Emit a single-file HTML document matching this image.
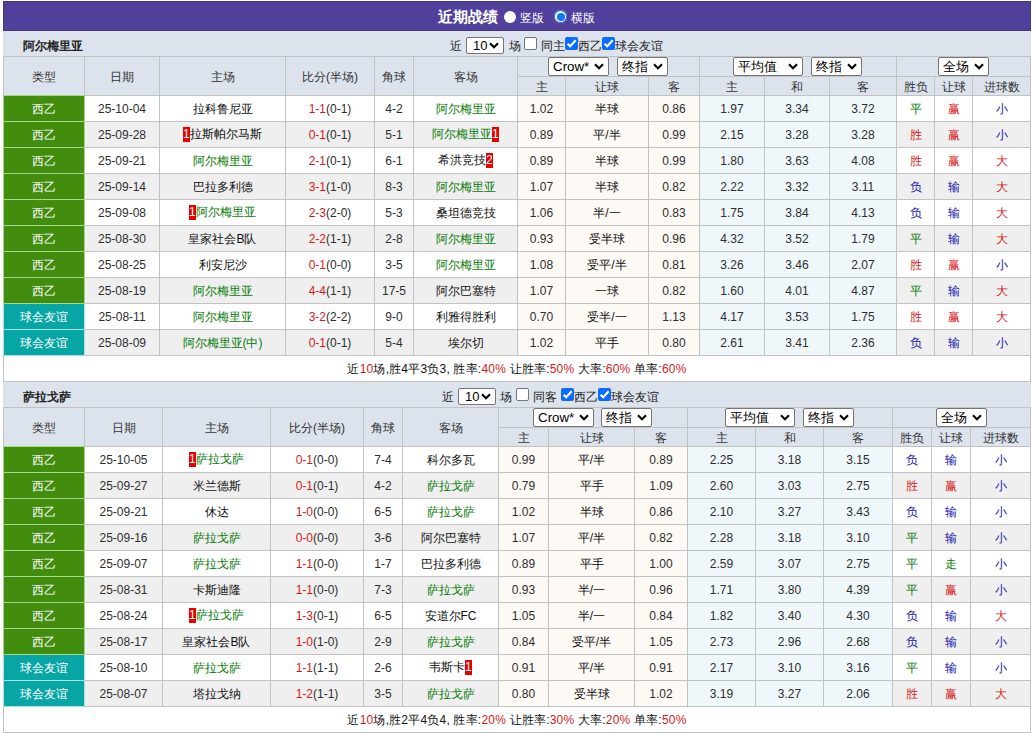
<!DOCTYPE html>
<html><head><meta charset="utf-8"><style>
.sm{letter-spacing:0.2px}
*{margin:0;padding:0;box-sizing:content-box}
html,body{width:1033px;height:733px;overflow:hidden;background:#fff}
body{position:relative;font-family:"Liberation Sans",sans-serif;font-size:12px;color:#111111;-webkit-text-stroke-width:0px}
.num{-webkit-text-stroke-width:0}
body>div{position:absolute}
.c{display:flex;align-items:center;justify-content:center;white-space:nowrap;line-height:14px}
.tn{font-weight:bold;font-size:12px;color:#222;white-space:nowrap;-webkit-text-stroke-width:0}
.lt{height:25px;line-height:31px;white-space:nowrap;color:#222}
.title{color:#fff;font-weight:bold;font-size:15px;white-space:nowrap;-webkit-text-stroke-width:0}
.tl{color:#fff;font-size:12px;height:30px;line-height:30px;white-space:nowrap}
.radio{width:13px;height:13px;border-radius:50%;background:#fff;box-sizing:border-box}
.radio div{position:absolute;border-radius:50%}
.radio .r0{left:0px;top:0px;width:13px;height:13px;background:#2a62e8}
.radio .r1{left:1px;top:1px;width:11px;height:11px;background:#fff}
.radio .r2{left:2.5px;top:2.5px;width:8px;height:8px;background:#0a78ff}
.sel{background:#fff;border:1px solid #767676;border-radius:2px;color:#000}
.sel .st{position:absolute;left:4px;top:0;bottom:0;display:flex;align-items:center;white-space:nowrap}
.sel .chev{position:absolute;right:4px;top:0;bottom:0;display:flex;align-items:center}
.cb{width:11px;height:11px;border:1px solid #767676;border-radius:2px;background:#fff}
.cb.on{width:13px;height:13px;border:none;background:#0a6cff;border-radius:2px}
.cb svg{position:absolute;left:0;top:0}
.bd{display:inline-block;background:#e60000;color:#fff;font-size:12px;line-height:15px;height:15px;width:7px;text-align:center;vertical-align:0px;text-indent:-0.5px}
</style></head>
<body>
<div style="left:3px;top:1px;width:1026px;height:28px;background:#50409b;border:1px solid #433a7e;"></div><div class="title" style="left:438px;top:2px;height:30px;line-height:30px;">近期战绩</div><div class="radio" style="left:504px;top:11px;width:12px;height:12px;"></div><div class="tl" style="left:520px;top:3px;">竖版</div><div class="radio on" style="left:554px;top:10px;"><div class="r0"></div><div class="r1"></div><div class="r2"></div></div><div class="tl" style="left:571px;top:3px;">横版</div><div style="left:3px;top:31px;width:1028px;height:25px;background:#dce3ed;"></div><div class="tn" style="left:23px;top:34px;height:25px;line-height:25px;">阿尔梅里亚</div><div class="lt" style="left:450px;top:31px;">近</div><div class="sel" style="left:466px;top:37px;width:36px;height:15px;"><span class="st" style="font-size:13px;left:6px;font-family:"Liberation Mono",monospace;">10</span><span class="chev"><svg width="10" height="7" viewBox="0 0 10 7"><path d="M1 1.2 L5 5.2 L9 1.2" fill="none" stroke="#000" stroke-width="2.1"/></svg></span></div><div class="lt" style="left:509px;top:31px;">场</div><div class="cb" style="left:524px;top:37px;"></div><div class="lt" style="left:541px;top:31px;">同主</div><div class="cb on" style="left:565px;top:37px;"><svg width="13" height="13" viewBox="0 0 13 13"><path d="M2.6 6.7 L5.2 9.3 L10.7 3.3" fill="none" stroke="#fff" stroke-width="2.1"/></svg></div><div class="lt" style="left:578px;top:31px;">西乙</div><div class="cb on" style="left:602px;top:37px;"><svg width="13" height="13" viewBox="0 0 13 13"><path d="M2.6 6.7 L5.2 9.3 L10.7 3.3" fill="none" stroke="#fff" stroke-width="2.1"/></svg></div><div class="lt" style="left:615px;top:31px;">球会友谊</div><div style="left:3px;top:56px;width:1028px;height:40px;background:#dce3ed;"></div><div style="left:3px;top:56px;width:1028px;height:1px;background:#c2c2c2;"></div><div style="left:3px;top:95px;width:1028px;height:1px;background:#c2c2c2;"></div><div style="left:517px;top:76px;width:513px;height:1px;background:#c2c2c2;"></div><div class="c" style="left:4px;top:58px;width:80px;height:38px;color:#333;"><span>类型</span></div><div class="c" style="left:85px;top:58px;width:74px;height:38px;color:#333;"><span>日期</span></div><div class="c" style="left:160px;top:58px;width:125px;height:38px;color:#333;"><span>主场</span></div><div class="c" style="left:286px;top:58px;width:88px;height:38px;color:#333;"><span>比分(半场)</span></div><div class="c" style="left:375px;top:58px;width:38px;height:38px;color:#333;"><span>角球</span></div><div class="c" style="left:414px;top:58px;width:103px;height:38px;color:#333;"><span>客场</span></div><div class="c" style="left:518px;top:78px;width:47px;height:18px;color:#333;"><span>主</span></div><div class="c" style="left:566px;top:78px;width:82px;height:18px;color:#333;"><span>让球</span></div><div class="c" style="left:649px;top:78px;width:50px;height:18px;color:#333;"><span>客</span></div><div class="c" style="left:700px;top:78px;width:64px;height:18px;color:#333;"><span>主</span></div><div class="c" style="left:765px;top:78px;width:64px;height:18px;color:#333;"><span>和</span></div><div class="c" style="left:830px;top:78px;width:66px;height:18px;color:#333;"><span>客</span></div><div class="c" style="left:897px;top:78px;width:37px;height:18px;color:#333;"><span>胜负</span></div><div class="c" style="left:935px;top:78px;width:37px;height:18px;color:#333;"><span>让球</span></div><div class="c" style="left:973px;top:78px;width:57px;height:18px;color:#333;"><span>进球数</span></div><div class="sel" style="left:548px;top:57px;width:59px;height:17px;"><span class="st" style="font-size:13.33px;left:4px;">Crow*</span><span class="chev"><svg width="10" height="7" viewBox="0 0 10 7"><path d="M1 1.2 L5 5.2 L9 1.2" fill="none" stroke="#000" stroke-width="2.1"/></svg></span></div><div class="sel" style="left:617px;top:57px;width:49px;height:17px;"><span class="st" style="font-size:13.33px;left:4px;">终指</span><span class="chev"><svg width="10" height="7" viewBox="0 0 10 7"><path d="M1 1.2 L5 5.2 L9 1.2" fill="none" stroke="#000" stroke-width="2.1"/></svg></span></div><div class="sel" style="left:733px;top:57px;width:68px;height:17px;"><span class="st" style="font-size:13.33px;left:4px;">平均值</span><span class="chev"><svg width="10" height="7" viewBox="0 0 10 7"><path d="M1 1.2 L5 5.2 L9 1.2" fill="none" stroke="#000" stroke-width="2.1"/></svg></span></div><div class="sel" style="left:811px;top:57px;width:49px;height:17px;"><span class="st" style="font-size:13.33px;left:4px;">终指</span><span class="chev"><svg width="10" height="7" viewBox="0 0 10 7"><path d="M1 1.2 L5 5.2 L9 1.2" fill="none" stroke="#000" stroke-width="2.1"/></svg></span></div><div class="sel" style="left:938px;top:57px;width:49px;height:17px;"><span class="st" style="font-size:13.33px;left:4px;">全场</span><span class="chev"><svg width="10" height="7" viewBox="0 0 10 7"><path d="M1 1.2 L5 5.2 L9 1.2" fill="none" stroke="#000" stroke-width="2.1"/></svg></span></div><div style="left:4px;top:96px;width:80px;height:25px;background:#428c0e;"></div><div style="left:85px;top:96px;width:74px;height:25px;background:#ffffff;"></div><div style="left:160px;top:96px;width:125px;height:25px;background:#ffffff;"></div><div style="left:286px;top:96px;width:88px;height:25px;background:#ffffff;"></div><div style="left:375px;top:96px;width:38px;height:25px;background:#ffffff;"></div><div style="left:414px;top:96px;width:103px;height:25px;background:#ffffff;"></div><div style="left:518px;top:96px;width:47px;height:25px;background:#fdf9f5;"></div><div style="left:566px;top:96px;width:82px;height:25px;background:#fdf9f5;"></div><div style="left:649px;top:96px;width:50px;height:25px;background:#fdf9f5;"></div><div style="left:700px;top:96px;width:64px;height:25px;background:#f0f7fb;"></div><div style="left:765px;top:96px;width:64px;height:25px;background:#f0f7fb;"></div><div style="left:830px;top:96px;width:66px;height:25px;background:#f0f7fb;"></div><div style="left:897px;top:96px;width:37px;height:25px;background:#ffffff;"></div><div style="left:935px;top:96px;width:37px;height:25px;background:#ffffff;"></div><div style="left:973px;top:96px;width:57px;height:25px;background:#ffffff;"></div><div class="c" style="left:4px;top:96px;width:80px;height:25px;"><span></span></div><div class="c" style="left:85px;top:96px;width:74px;height:25px;color:#2e2e2e;-webkit-text-stroke-width:0;"><span>25-10-04</span></div><div class="c" style="left:160px;top:96px;width:125px;height:25px;"><span><span style="color:#111111">拉科鲁尼亚</span></span></div><div class="c" style="left:286px;top:96px;width:88px;height:25px;color:#2e2e2e;-webkit-text-stroke-width:0;"><span><span style="color:#d61a1a">1-1</span>(0-1)</span></div><div class="c" style="left:375px;top:96px;width:38px;height:25px;color:#2e2e2e;-webkit-text-stroke-width:0;"><span>4-2</span></div><div class="c" style="left:414px;top:96px;width:103px;height:25px;"><span><span style="color:#067a06">阿尔梅里亚</span></span></div><div class="c" style="left:518px;top:96px;width:47px;height:25px;color:#2e2e2e;-webkit-text-stroke-width:0;"><span>1.02</span></div><div class="c" style="left:566px;top:96px;width:82px;height:25px;"><span>半球</span></div><div class="c" style="left:649px;top:96px;width:50px;height:25px;color:#2e2e2e;-webkit-text-stroke-width:0;"><span>0.86</span></div><div class="c" style="left:700px;top:96px;width:64px;height:25px;color:#2e2e2e;-webkit-text-stroke-width:0;"><span>1.97</span></div><div class="c" style="left:765px;top:96px;width:64px;height:25px;color:#2e2e2e;-webkit-text-stroke-width:0;"><span>3.34</span></div><div class="c" style="left:830px;top:96px;width:66px;height:25px;color:#2e2e2e;-webkit-text-stroke-width:0;"><span>3.72</span></div><div class="c" style="left:897px;top:96px;width:37px;height:25px;"><span><span style="color:#067a06">平</span></span></div><div class="c" style="left:935px;top:96px;width:37px;height:25px;"><span><span style="color:#d61a1a">赢</span></span></div><div class="c" style="left:973px;top:96px;width:57px;height:25px;"><span><span style="color:#1414b0">小</span></span></div><div style="left:3px;top:121px;width:1028px;height:1px;background:#c2c2c2;"></div><div style="left:4px;top:122px;width:80px;height:25px;background:#428c0e;"></div><div style="left:85px;top:122px;width:74px;height:25px;background:#efefef;"></div><div style="left:160px;top:122px;width:125px;height:25px;background:#efefef;"></div><div style="left:286px;top:122px;width:88px;height:25px;background:#efefef;"></div><div style="left:375px;top:122px;width:38px;height:25px;background:#efefef;"></div><div style="left:414px;top:122px;width:103px;height:25px;background:#efefef;"></div><div style="left:518px;top:122px;width:47px;height:25px;background:#fdf9f5;"></div><div style="left:566px;top:122px;width:82px;height:25px;background:#fdf9f5;"></div><div style="left:649px;top:122px;width:50px;height:25px;background:#fdf9f5;"></div><div style="left:700px;top:122px;width:64px;height:25px;background:#f0f7fb;"></div><div style="left:765px;top:122px;width:64px;height:25px;background:#f0f7fb;"></div><div style="left:830px;top:122px;width:66px;height:25px;background:#f0f7fb;"></div><div style="left:897px;top:122px;width:37px;height:25px;background:#efefef;"></div><div style="left:935px;top:122px;width:37px;height:25px;background:#efefef;"></div><div style="left:973px;top:122px;width:57px;height:25px;background:#efefef;"></div><div class="c" style="left:4px;top:122px;width:80px;height:25px;"><span></span></div><div class="c" style="left:85px;top:122px;width:74px;height:25px;color:#2e2e2e;-webkit-text-stroke-width:0;"><span>25-09-28</span></div><div class="c" style="left:160px;top:122px;width:125px;height:25px;"><span><span class="bd">1</span><span style="color:#111111">拉斯帕尔马斯</span></span></div><div class="c" style="left:286px;top:122px;width:88px;height:25px;color:#2e2e2e;-webkit-text-stroke-width:0;"><span><span style="color:#d61a1a">0-1</span>(0-1)</span></div><div class="c" style="left:375px;top:122px;width:38px;height:25px;color:#2e2e2e;-webkit-text-stroke-width:0;"><span>5-1</span></div><div class="c" style="left:414px;top:122px;width:103px;height:25px;"><span><span style="color:#067a06">阿尔梅里亚</span><span class="bd">1</span></span></div><div class="c" style="left:518px;top:122px;width:47px;height:25px;color:#2e2e2e;-webkit-text-stroke-width:0;"><span>0.89</span></div><div class="c" style="left:566px;top:122px;width:82px;height:25px;"><span>平/半</span></div><div class="c" style="left:649px;top:122px;width:50px;height:25px;color:#2e2e2e;-webkit-text-stroke-width:0;"><span>0.99</span></div><div class="c" style="left:700px;top:122px;width:64px;height:25px;color:#2e2e2e;-webkit-text-stroke-width:0;"><span>2.15</span></div><div class="c" style="left:765px;top:122px;width:64px;height:25px;color:#2e2e2e;-webkit-text-stroke-width:0;"><span>3.28</span></div><div class="c" style="left:830px;top:122px;width:66px;height:25px;color:#2e2e2e;-webkit-text-stroke-width:0;"><span>3.28</span></div><div class="c" style="left:897px;top:122px;width:37px;height:25px;"><span><span style="color:#d61a1a">胜</span></span></div><div class="c" style="left:935px;top:122px;width:37px;height:25px;"><span><span style="color:#d61a1a">赢</span></span></div><div class="c" style="left:973px;top:122px;width:57px;height:25px;"><span><span style="color:#1414b0">小</span></span></div><div style="left:3px;top:147px;width:1028px;height:1px;background:#c2c2c2;"></div><div style="left:4px;top:148px;width:80px;height:25px;background:#428c0e;"></div><div style="left:85px;top:148px;width:74px;height:25px;background:#ffffff;"></div><div style="left:160px;top:148px;width:125px;height:25px;background:#ffffff;"></div><div style="left:286px;top:148px;width:88px;height:25px;background:#ffffff;"></div><div style="left:375px;top:148px;width:38px;height:25px;background:#ffffff;"></div><div style="left:414px;top:148px;width:103px;height:25px;background:#ffffff;"></div><div style="left:518px;top:148px;width:47px;height:25px;background:#fdf9f5;"></div><div style="left:566px;top:148px;width:82px;height:25px;background:#fdf9f5;"></div><div style="left:649px;top:148px;width:50px;height:25px;background:#fdf9f5;"></div><div style="left:700px;top:148px;width:64px;height:25px;background:#f0f7fb;"></div><div style="left:765px;top:148px;width:64px;height:25px;background:#f0f7fb;"></div><div style="left:830px;top:148px;width:66px;height:25px;background:#f0f7fb;"></div><div style="left:897px;top:148px;width:37px;height:25px;background:#ffffff;"></div><div style="left:935px;top:148px;width:37px;height:25px;background:#ffffff;"></div><div style="left:973px;top:148px;width:57px;height:25px;background:#ffffff;"></div><div class="c" style="left:4px;top:148px;width:80px;height:25px;"><span></span></div><div class="c" style="left:85px;top:148px;width:74px;height:25px;color:#2e2e2e;-webkit-text-stroke-width:0;"><span>25-09-21</span></div><div class="c" style="left:160px;top:148px;width:125px;height:25px;"><span><span style="color:#067a06">阿尔梅里亚</span></span></div><div class="c" style="left:286px;top:148px;width:88px;height:25px;color:#2e2e2e;-webkit-text-stroke-width:0;"><span><span style="color:#d61a1a">2-1</span>(0-1)</span></div><div class="c" style="left:375px;top:148px;width:38px;height:25px;color:#2e2e2e;-webkit-text-stroke-width:0;"><span>6-1</span></div><div class="c" style="left:414px;top:148px;width:103px;height:25px;"><span><span style="color:#111111">希洪竞技</span><span class="bd">2</span></span></div><div class="c" style="left:518px;top:148px;width:47px;height:25px;color:#2e2e2e;-webkit-text-stroke-width:0;"><span>0.89</span></div><div class="c" style="left:566px;top:148px;width:82px;height:25px;"><span>半球</span></div><div class="c" style="left:649px;top:148px;width:50px;height:25px;color:#2e2e2e;-webkit-text-stroke-width:0;"><span>0.99</span></div><div class="c" style="left:700px;top:148px;width:64px;height:25px;color:#2e2e2e;-webkit-text-stroke-width:0;"><span>1.80</span></div><div class="c" style="left:765px;top:148px;width:64px;height:25px;color:#2e2e2e;-webkit-text-stroke-width:0;"><span>3.63</span></div><div class="c" style="left:830px;top:148px;width:66px;height:25px;color:#2e2e2e;-webkit-text-stroke-width:0;"><span>4.08</span></div><div class="c" style="left:897px;top:148px;width:37px;height:25px;"><span><span style="color:#d61a1a">胜</span></span></div><div class="c" style="left:935px;top:148px;width:37px;height:25px;"><span><span style="color:#d61a1a">赢</span></span></div><div class="c" style="left:973px;top:148px;width:57px;height:25px;"><span><span style="color:#d61a1a">大</span></span></div><div style="left:3px;top:173px;width:1028px;height:1px;background:#c2c2c2;"></div><div style="left:4px;top:174px;width:80px;height:25px;background:#428c0e;"></div><div style="left:85px;top:174px;width:74px;height:25px;background:#efefef;"></div><div style="left:160px;top:174px;width:125px;height:25px;background:#efefef;"></div><div style="left:286px;top:174px;width:88px;height:25px;background:#efefef;"></div><div style="left:375px;top:174px;width:38px;height:25px;background:#efefef;"></div><div style="left:414px;top:174px;width:103px;height:25px;background:#efefef;"></div><div style="left:518px;top:174px;width:47px;height:25px;background:#fdf9f5;"></div><div style="left:566px;top:174px;width:82px;height:25px;background:#fdf9f5;"></div><div style="left:649px;top:174px;width:50px;height:25px;background:#fdf9f5;"></div><div style="left:700px;top:174px;width:64px;height:25px;background:#f0f7fb;"></div><div style="left:765px;top:174px;width:64px;height:25px;background:#f0f7fb;"></div><div style="left:830px;top:174px;width:66px;height:25px;background:#f0f7fb;"></div><div style="left:897px;top:174px;width:37px;height:25px;background:#efefef;"></div><div style="left:935px;top:174px;width:37px;height:25px;background:#efefef;"></div><div style="left:973px;top:174px;width:57px;height:25px;background:#efefef;"></div><div class="c" style="left:4px;top:174px;width:80px;height:25px;"><span></span></div><div class="c" style="left:85px;top:174px;width:74px;height:25px;color:#2e2e2e;-webkit-text-stroke-width:0;"><span>25-09-14</span></div><div class="c" style="left:160px;top:174px;width:125px;height:25px;"><span><span style="color:#111111">巴拉多利德</span></span></div><div class="c" style="left:286px;top:174px;width:88px;height:25px;color:#2e2e2e;-webkit-text-stroke-width:0;"><span><span style="color:#d61a1a">3-1</span>(1-0)</span></div><div class="c" style="left:375px;top:174px;width:38px;height:25px;color:#2e2e2e;-webkit-text-stroke-width:0;"><span>8-3</span></div><div class="c" style="left:414px;top:174px;width:103px;height:25px;"><span><span style="color:#067a06">阿尔梅里亚</span></span></div><div class="c" style="left:518px;top:174px;width:47px;height:25px;color:#2e2e2e;-webkit-text-stroke-width:0;"><span>1.07</span></div><div class="c" style="left:566px;top:174px;width:82px;height:25px;"><span>半球</span></div><div class="c" style="left:649px;top:174px;width:50px;height:25px;color:#2e2e2e;-webkit-text-stroke-width:0;"><span>0.82</span></div><div class="c" style="left:700px;top:174px;width:64px;height:25px;color:#2e2e2e;-webkit-text-stroke-width:0;"><span>2.22</span></div><div class="c" style="left:765px;top:174px;width:64px;height:25px;color:#2e2e2e;-webkit-text-stroke-width:0;"><span>3.32</span></div><div class="c" style="left:830px;top:174px;width:66px;height:25px;color:#2e2e2e;-webkit-text-stroke-width:0;"><span>3.11</span></div><div class="c" style="left:897px;top:174px;width:37px;height:25px;"><span><span style="color:#1414b0">负</span></span></div><div class="c" style="left:935px;top:174px;width:37px;height:25px;"><span><span style="color:#1414b0">输</span></span></div><div class="c" style="left:973px;top:174px;width:57px;height:25px;"><span><span style="color:#d61a1a">大</span></span></div><div style="left:3px;top:199px;width:1028px;height:1px;background:#c2c2c2;"></div><div style="left:4px;top:200px;width:80px;height:25px;background:#428c0e;"></div><div style="left:85px;top:200px;width:74px;height:25px;background:#ffffff;"></div><div style="left:160px;top:200px;width:125px;height:25px;background:#ffffff;"></div><div style="left:286px;top:200px;width:88px;height:25px;background:#ffffff;"></div><div style="left:375px;top:200px;width:38px;height:25px;background:#ffffff;"></div><div style="left:414px;top:200px;width:103px;height:25px;background:#ffffff;"></div><div style="left:518px;top:200px;width:47px;height:25px;background:#fdf9f5;"></div><div style="left:566px;top:200px;width:82px;height:25px;background:#fdf9f5;"></div><div style="left:649px;top:200px;width:50px;height:25px;background:#fdf9f5;"></div><div style="left:700px;top:200px;width:64px;height:25px;background:#f0f7fb;"></div><div style="left:765px;top:200px;width:64px;height:25px;background:#f0f7fb;"></div><div style="left:830px;top:200px;width:66px;height:25px;background:#f0f7fb;"></div><div style="left:897px;top:200px;width:37px;height:25px;background:#ffffff;"></div><div style="left:935px;top:200px;width:37px;height:25px;background:#ffffff;"></div><div style="left:973px;top:200px;width:57px;height:25px;background:#ffffff;"></div><div class="c" style="left:4px;top:200px;width:80px;height:25px;"><span></span></div><div class="c" style="left:85px;top:200px;width:74px;height:25px;color:#2e2e2e;-webkit-text-stroke-width:0;"><span>25-09-08</span></div><div class="c" style="left:160px;top:200px;width:125px;height:25px;"><span><span class="bd">1</span><span style="color:#067a06">阿尔梅里亚</span></span></div><div class="c" style="left:286px;top:200px;width:88px;height:25px;color:#2e2e2e;-webkit-text-stroke-width:0;"><span><span style="color:#d61a1a">2-3</span>(2-0)</span></div><div class="c" style="left:375px;top:200px;width:38px;height:25px;color:#2e2e2e;-webkit-text-stroke-width:0;"><span>5-3</span></div><div class="c" style="left:414px;top:200px;width:103px;height:25px;"><span><span style="color:#111111">桑坦德竞技</span></span></div><div class="c" style="left:518px;top:200px;width:47px;height:25px;color:#2e2e2e;-webkit-text-stroke-width:0;"><span>1.06</span></div><div class="c" style="left:566px;top:200px;width:82px;height:25px;"><span>半/一</span></div><div class="c" style="left:649px;top:200px;width:50px;height:25px;color:#2e2e2e;-webkit-text-stroke-width:0;"><span>0.83</span></div><div class="c" style="left:700px;top:200px;width:64px;height:25px;color:#2e2e2e;-webkit-text-stroke-width:0;"><span>1.75</span></div><div class="c" style="left:765px;top:200px;width:64px;height:25px;color:#2e2e2e;-webkit-text-stroke-width:0;"><span>3.84</span></div><div class="c" style="left:830px;top:200px;width:66px;height:25px;color:#2e2e2e;-webkit-text-stroke-width:0;"><span>4.13</span></div><div class="c" style="left:897px;top:200px;width:37px;height:25px;"><span><span style="color:#1414b0">负</span></span></div><div class="c" style="left:935px;top:200px;width:37px;height:25px;"><span><span style="color:#1414b0">输</span></span></div><div class="c" style="left:973px;top:200px;width:57px;height:25px;"><span><span style="color:#d61a1a">大</span></span></div><div style="left:3px;top:225px;width:1028px;height:1px;background:#c2c2c2;"></div><div style="left:4px;top:226px;width:80px;height:25px;background:#428c0e;"></div><div style="left:85px;top:226px;width:74px;height:25px;background:#efefef;"></div><div style="left:160px;top:226px;width:125px;height:25px;background:#efefef;"></div><div style="left:286px;top:226px;width:88px;height:25px;background:#efefef;"></div><div style="left:375px;top:226px;width:38px;height:25px;background:#efefef;"></div><div style="left:414px;top:226px;width:103px;height:25px;background:#efefef;"></div><div style="left:518px;top:226px;width:47px;height:25px;background:#fdf9f5;"></div><div style="left:566px;top:226px;width:82px;height:25px;background:#fdf9f5;"></div><div style="left:649px;top:226px;width:50px;height:25px;background:#fdf9f5;"></div><div style="left:700px;top:226px;width:64px;height:25px;background:#f0f7fb;"></div><div style="left:765px;top:226px;width:64px;height:25px;background:#f0f7fb;"></div><div style="left:830px;top:226px;width:66px;height:25px;background:#f0f7fb;"></div><div style="left:897px;top:226px;width:37px;height:25px;background:#efefef;"></div><div style="left:935px;top:226px;width:37px;height:25px;background:#efefef;"></div><div style="left:973px;top:226px;width:57px;height:25px;background:#efefef;"></div><div class="c" style="left:4px;top:226px;width:80px;height:25px;"><span></span></div><div class="c" style="left:85px;top:226px;width:74px;height:25px;color:#2e2e2e;-webkit-text-stroke-width:0;"><span>25-08-30</span></div><div class="c" style="left:160px;top:226px;width:125px;height:25px;"><span><span style="color:#111111">皇家社会B队</span></span></div><div class="c" style="left:286px;top:226px;width:88px;height:25px;color:#2e2e2e;-webkit-text-stroke-width:0;"><span><span style="color:#d61a1a">2-2</span>(1-1)</span></div><div class="c" style="left:375px;top:226px;width:38px;height:25px;color:#2e2e2e;-webkit-text-stroke-width:0;"><span>2-8</span></div><div class="c" style="left:414px;top:226px;width:103px;height:25px;"><span><span style="color:#067a06">阿尔梅里亚</span></span></div><div class="c" style="left:518px;top:226px;width:47px;height:25px;color:#2e2e2e;-webkit-text-stroke-width:0;"><span>0.93</span></div><div class="c" style="left:566px;top:226px;width:82px;height:25px;"><span>受半球</span></div><div class="c" style="left:649px;top:226px;width:50px;height:25px;color:#2e2e2e;-webkit-text-stroke-width:0;"><span>0.96</span></div><div class="c" style="left:700px;top:226px;width:64px;height:25px;color:#2e2e2e;-webkit-text-stroke-width:0;"><span>4.32</span></div><div class="c" style="left:765px;top:226px;width:64px;height:25px;color:#2e2e2e;-webkit-text-stroke-width:0;"><span>3.52</span></div><div class="c" style="left:830px;top:226px;width:66px;height:25px;color:#2e2e2e;-webkit-text-stroke-width:0;"><span>1.79</span></div><div class="c" style="left:897px;top:226px;width:37px;height:25px;"><span><span style="color:#067a06">平</span></span></div><div class="c" style="left:935px;top:226px;width:37px;height:25px;"><span><span style="color:#1414b0">输</span></span></div><div class="c" style="left:973px;top:226px;width:57px;height:25px;"><span><span style="color:#d61a1a">大</span></span></div><div style="left:3px;top:251px;width:1028px;height:1px;background:#c2c2c2;"></div><div style="left:4px;top:252px;width:80px;height:25px;background:#428c0e;"></div><div style="left:85px;top:252px;width:74px;height:25px;background:#ffffff;"></div><div style="left:160px;top:252px;width:125px;height:25px;background:#ffffff;"></div><div style="left:286px;top:252px;width:88px;height:25px;background:#ffffff;"></div><div style="left:375px;top:252px;width:38px;height:25px;background:#ffffff;"></div><div style="left:414px;top:252px;width:103px;height:25px;background:#ffffff;"></div><div style="left:518px;top:252px;width:47px;height:25px;background:#fdf9f5;"></div><div style="left:566px;top:252px;width:82px;height:25px;background:#fdf9f5;"></div><div style="left:649px;top:252px;width:50px;height:25px;background:#fdf9f5;"></div><div style="left:700px;top:252px;width:64px;height:25px;background:#f0f7fb;"></div><div style="left:765px;top:252px;width:64px;height:25px;background:#f0f7fb;"></div><div style="left:830px;top:252px;width:66px;height:25px;background:#f0f7fb;"></div><div style="left:897px;top:252px;width:37px;height:25px;background:#ffffff;"></div><div style="left:935px;top:252px;width:37px;height:25px;background:#ffffff;"></div><div style="left:973px;top:252px;width:57px;height:25px;background:#ffffff;"></div><div class="c" style="left:4px;top:252px;width:80px;height:25px;"><span></span></div><div class="c" style="left:85px;top:252px;width:74px;height:25px;color:#2e2e2e;-webkit-text-stroke-width:0;"><span>25-08-25</span></div><div class="c" style="left:160px;top:252px;width:125px;height:25px;"><span><span style="color:#111111">利安尼沙</span></span></div><div class="c" style="left:286px;top:252px;width:88px;height:25px;color:#2e2e2e;-webkit-text-stroke-width:0;"><span><span style="color:#d61a1a">0-1</span>(0-0)</span></div><div class="c" style="left:375px;top:252px;width:38px;height:25px;color:#2e2e2e;-webkit-text-stroke-width:0;"><span>3-5</span></div><div class="c" style="left:414px;top:252px;width:103px;height:25px;"><span><span style="color:#067a06">阿尔梅里亚</span></span></div><div class="c" style="left:518px;top:252px;width:47px;height:25px;color:#2e2e2e;-webkit-text-stroke-width:0;"><span>1.08</span></div><div class="c" style="left:566px;top:252px;width:82px;height:25px;"><span>受平/半</span></div><div class="c" style="left:649px;top:252px;width:50px;height:25px;color:#2e2e2e;-webkit-text-stroke-width:0;"><span>0.81</span></div><div class="c" style="left:700px;top:252px;width:64px;height:25px;color:#2e2e2e;-webkit-text-stroke-width:0;"><span>3.26</span></div><div class="c" style="left:765px;top:252px;width:64px;height:25px;color:#2e2e2e;-webkit-text-stroke-width:0;"><span>3.46</span></div><div class="c" style="left:830px;top:252px;width:66px;height:25px;color:#2e2e2e;-webkit-text-stroke-width:0;"><span>2.07</span></div><div class="c" style="left:897px;top:252px;width:37px;height:25px;"><span><span style="color:#d61a1a">胜</span></span></div><div class="c" style="left:935px;top:252px;width:37px;height:25px;"><span><span style="color:#d61a1a">赢</span></span></div><div class="c" style="left:973px;top:252px;width:57px;height:25px;"><span><span style="color:#1414b0">小</span></span></div><div style="left:3px;top:277px;width:1028px;height:1px;background:#c2c2c2;"></div><div style="left:4px;top:278px;width:80px;height:25px;background:#428c0e;"></div><div style="left:85px;top:278px;width:74px;height:25px;background:#efefef;"></div><div style="left:160px;top:278px;width:125px;height:25px;background:#efefef;"></div><div style="left:286px;top:278px;width:88px;height:25px;background:#efefef;"></div><div style="left:375px;top:278px;width:38px;height:25px;background:#efefef;"></div><div style="left:414px;top:278px;width:103px;height:25px;background:#efefef;"></div><div style="left:518px;top:278px;width:47px;height:25px;background:#fdf9f5;"></div><div style="left:566px;top:278px;width:82px;height:25px;background:#fdf9f5;"></div><div style="left:649px;top:278px;width:50px;height:25px;background:#fdf9f5;"></div><div style="left:700px;top:278px;width:64px;height:25px;background:#f0f7fb;"></div><div style="left:765px;top:278px;width:64px;height:25px;background:#f0f7fb;"></div><div style="left:830px;top:278px;width:66px;height:25px;background:#f0f7fb;"></div><div style="left:897px;top:278px;width:37px;height:25px;background:#efefef;"></div><div style="left:935px;top:278px;width:37px;height:25px;background:#efefef;"></div><div style="left:973px;top:278px;width:57px;height:25px;background:#efefef;"></div><div class="c" style="left:4px;top:278px;width:80px;height:25px;"><span></span></div><div class="c" style="left:85px;top:278px;width:74px;height:25px;color:#2e2e2e;-webkit-text-stroke-width:0;"><span>25-08-19</span></div><div class="c" style="left:160px;top:278px;width:125px;height:25px;"><span><span style="color:#067a06">阿尔梅里亚</span></span></div><div class="c" style="left:286px;top:278px;width:88px;height:25px;color:#2e2e2e;-webkit-text-stroke-width:0;"><span><span style="color:#d61a1a">4-4</span>(1-1)</span></div><div class="c" style="left:375px;top:278px;width:38px;height:25px;color:#2e2e2e;-webkit-text-stroke-width:0;"><span>17-5</span></div><div class="c" style="left:414px;top:278px;width:103px;height:25px;"><span><span style="color:#111111">阿尔巴塞特</span></span></div><div class="c" style="left:518px;top:278px;width:47px;height:25px;color:#2e2e2e;-webkit-text-stroke-width:0;"><span>1.07</span></div><div class="c" style="left:566px;top:278px;width:82px;height:25px;"><span>一球</span></div><div class="c" style="left:649px;top:278px;width:50px;height:25px;color:#2e2e2e;-webkit-text-stroke-width:0;"><span>0.82</span></div><div class="c" style="left:700px;top:278px;width:64px;height:25px;color:#2e2e2e;-webkit-text-stroke-width:0;"><span>1.60</span></div><div class="c" style="left:765px;top:278px;width:64px;height:25px;color:#2e2e2e;-webkit-text-stroke-width:0;"><span>4.01</span></div><div class="c" style="left:830px;top:278px;width:66px;height:25px;color:#2e2e2e;-webkit-text-stroke-width:0;"><span>4.87</span></div><div class="c" style="left:897px;top:278px;width:37px;height:25px;"><span><span style="color:#067a06">平</span></span></div><div class="c" style="left:935px;top:278px;width:37px;height:25px;"><span><span style="color:#1414b0">输</span></span></div><div class="c" style="left:973px;top:278px;width:57px;height:25px;"><span><span style="color:#d61a1a">大</span></span></div><div style="left:3px;top:303px;width:1028px;height:1px;background:#c2c2c2;"></div><div style="left:4px;top:304px;width:80px;height:25px;background:#08a5a5;"></div><div style="left:85px;top:304px;width:74px;height:25px;background:#ffffff;"></div><div style="left:160px;top:304px;width:125px;height:25px;background:#ffffff;"></div><div style="left:286px;top:304px;width:88px;height:25px;background:#ffffff;"></div><div style="left:375px;top:304px;width:38px;height:25px;background:#ffffff;"></div><div style="left:414px;top:304px;width:103px;height:25px;background:#ffffff;"></div><div style="left:518px;top:304px;width:47px;height:25px;background:#fdf9f5;"></div><div style="left:566px;top:304px;width:82px;height:25px;background:#fdf9f5;"></div><div style="left:649px;top:304px;width:50px;height:25px;background:#fdf9f5;"></div><div style="left:700px;top:304px;width:64px;height:25px;background:#f0f7fb;"></div><div style="left:765px;top:304px;width:64px;height:25px;background:#f0f7fb;"></div><div style="left:830px;top:304px;width:66px;height:25px;background:#f0f7fb;"></div><div style="left:897px;top:304px;width:37px;height:25px;background:#ffffff;"></div><div style="left:935px;top:304px;width:37px;height:25px;background:#ffffff;"></div><div style="left:973px;top:304px;width:57px;height:25px;background:#ffffff;"></div><div class="c" style="left:4px;top:304px;width:80px;height:25px;"><span></span></div><div class="c" style="left:85px;top:304px;width:74px;height:25px;color:#2e2e2e;-webkit-text-stroke-width:0;"><span>25-08-11</span></div><div class="c" style="left:160px;top:304px;width:125px;height:25px;"><span><span style="color:#067a06">阿尔梅里亚</span></span></div><div class="c" style="left:286px;top:304px;width:88px;height:25px;color:#2e2e2e;-webkit-text-stroke-width:0;"><span><span style="color:#d61a1a">3-2</span>(2-2)</span></div><div class="c" style="left:375px;top:304px;width:38px;height:25px;color:#2e2e2e;-webkit-text-stroke-width:0;"><span>9-0</span></div><div class="c" style="left:414px;top:304px;width:103px;height:25px;"><span><span style="color:#111111">利雅得胜利</span></span></div><div class="c" style="left:518px;top:304px;width:47px;height:25px;color:#2e2e2e;-webkit-text-stroke-width:0;"><span>0.70</span></div><div class="c" style="left:566px;top:304px;width:82px;height:25px;"><span>受半/一</span></div><div class="c" style="left:649px;top:304px;width:50px;height:25px;color:#2e2e2e;-webkit-text-stroke-width:0;"><span>1.13</span></div><div class="c" style="left:700px;top:304px;width:64px;height:25px;color:#2e2e2e;-webkit-text-stroke-width:0;"><span>4.17</span></div><div class="c" style="left:765px;top:304px;width:64px;height:25px;color:#2e2e2e;-webkit-text-stroke-width:0;"><span>3.53</span></div><div class="c" style="left:830px;top:304px;width:66px;height:25px;color:#2e2e2e;-webkit-text-stroke-width:0;"><span>1.75</span></div><div class="c" style="left:897px;top:304px;width:37px;height:25px;"><span><span style="color:#d61a1a">胜</span></span></div><div class="c" style="left:935px;top:304px;width:37px;height:25px;"><span><span style="color:#d61a1a">赢</span></span></div><div class="c" style="left:973px;top:304px;width:57px;height:25px;"><span><span style="color:#d61a1a">大</span></span></div><div style="left:3px;top:329px;width:1028px;height:1px;background:#c2c2c2;"></div><div style="left:4px;top:330px;width:80px;height:25px;background:#08a5a5;"></div><div style="left:85px;top:330px;width:74px;height:25px;background:#efefef;"></div><div style="left:160px;top:330px;width:125px;height:25px;background:#efefef;"></div><div style="left:286px;top:330px;width:88px;height:25px;background:#efefef;"></div><div style="left:375px;top:330px;width:38px;height:25px;background:#efefef;"></div><div style="left:414px;top:330px;width:103px;height:25px;background:#efefef;"></div><div style="left:518px;top:330px;width:47px;height:25px;background:#fdf9f5;"></div><div style="left:566px;top:330px;width:82px;height:25px;background:#fdf9f5;"></div><div style="left:649px;top:330px;width:50px;height:25px;background:#fdf9f5;"></div><div style="left:700px;top:330px;width:64px;height:25px;background:#f0f7fb;"></div><div style="left:765px;top:330px;width:64px;height:25px;background:#f0f7fb;"></div><div style="left:830px;top:330px;width:66px;height:25px;background:#f0f7fb;"></div><div style="left:897px;top:330px;width:37px;height:25px;background:#efefef;"></div><div style="left:935px;top:330px;width:37px;height:25px;background:#efefef;"></div><div style="left:973px;top:330px;width:57px;height:25px;background:#efefef;"></div><div class="c" style="left:4px;top:330px;width:80px;height:25px;"><span></span></div><div class="c" style="left:85px;top:330px;width:74px;height:25px;color:#2e2e2e;-webkit-text-stroke-width:0;"><span>25-08-09</span></div><div class="c" style="left:160px;top:330px;width:125px;height:25px;"><span><span style="color:#067a06">阿尔梅里亚(中)</span></span></div><div class="c" style="left:286px;top:330px;width:88px;height:25px;color:#2e2e2e;-webkit-text-stroke-width:0;"><span><span style="color:#d61a1a">0-1</span>(0-1)</span></div><div class="c" style="left:375px;top:330px;width:38px;height:25px;color:#2e2e2e;-webkit-text-stroke-width:0;"><span>5-4</span></div><div class="c" style="left:414px;top:330px;width:103px;height:25px;"><span><span style="color:#111111">埃尔切</span></span></div><div class="c" style="left:518px;top:330px;width:47px;height:25px;color:#2e2e2e;-webkit-text-stroke-width:0;"><span>1.02</span></div><div class="c" style="left:566px;top:330px;width:82px;height:25px;"><span>平手</span></div><div class="c" style="left:649px;top:330px;width:50px;height:25px;color:#2e2e2e;-webkit-text-stroke-width:0;"><span>0.80</span></div><div class="c" style="left:700px;top:330px;width:64px;height:25px;color:#2e2e2e;-webkit-text-stroke-width:0;"><span>2.61</span></div><div class="c" style="left:765px;top:330px;width:64px;height:25px;color:#2e2e2e;-webkit-text-stroke-width:0;"><span>3.41</span></div><div class="c" style="left:830px;top:330px;width:66px;height:25px;color:#2e2e2e;-webkit-text-stroke-width:0;"><span>2.36</span></div><div class="c" style="left:897px;top:330px;width:37px;height:25px;"><span><span style="color:#1414b0">负</span></span></div><div class="c" style="left:935px;top:330px;width:37px;height:25px;"><span><span style="color:#1414b0">输</span></span></div><div class="c" style="left:973px;top:330px;width:57px;height:25px;"><span><span style="color:#1414b0">小</span></span></div><div style="left:3px;top:355px;width:1028px;height:1px;background:#c2c2c2;"></div><div style="left:3px;top:56px;width:1px;height:300px;background:#c2c2c2;"></div><div style="left:84px;top:56px;width:1px;height:300px;background:#c2c2c2;"></div><div style="left:159px;top:56px;width:1px;height:300px;background:#c2c2c2;"></div><div style="left:285px;top:56px;width:1px;height:300px;background:#c2c2c2;"></div><div style="left:374px;top:56px;width:1px;height:300px;background:#c2c2c2;"></div><div style="left:413px;top:56px;width:1px;height:300px;background:#c2c2c2;"></div><div style="left:517px;top:56px;width:1px;height:300px;background:#c2c2c2;"></div><div style="left:565px;top:76px;width:1px;height:280px;background:#c2c2c2;"></div><div style="left:648px;top:76px;width:1px;height:280px;background:#c2c2c2;"></div><div style="left:699px;top:56px;width:1px;height:300px;background:#c2c2c2;"></div><div style="left:764px;top:76px;width:1px;height:280px;background:#c2c2c2;"></div><div style="left:829px;top:76px;width:1px;height:280px;background:#c2c2c2;"></div><div style="left:896px;top:56px;width:1px;height:300px;background:#c2c2c2;"></div><div style="left:934px;top:76px;width:1px;height:280px;background:#c2c2c2;"></div><div style="left:972px;top:76px;width:1px;height:280px;background:#c2c2c2;"></div><div style="left:1030px;top:56px;width:1px;height:300px;background:#c2c2c2;"></div><div style="left:3px;top:329px;width:82px;height:27px;background:#a0e4e4;"></div><div style="left:4px;top:330px;width:80px;height:25px;background:#08a5a5;"></div><div style="left:3px;top:303px;width:82px;height:27px;background:#a0e4e4;"></div><div style="left:4px;top:304px;width:80px;height:25px;background:#08a5a5;"></div><div style="left:3px;top:277px;width:82px;height:27px;background:#a6d88c;"></div><div style="left:4px;top:278px;width:80px;height:25px;background:#428c0e;"></div><div style="left:3px;top:251px;width:82px;height:27px;background:#a6d88c;"></div><div style="left:4px;top:252px;width:80px;height:25px;background:#428c0e;"></div><div style="left:3px;top:225px;width:82px;height:27px;background:#a6d88c;"></div><div style="left:4px;top:226px;width:80px;height:25px;background:#428c0e;"></div><div style="left:3px;top:199px;width:82px;height:27px;background:#a6d88c;"></div><div style="left:4px;top:200px;width:80px;height:25px;background:#428c0e;"></div><div style="left:3px;top:173px;width:82px;height:27px;background:#a6d88c;"></div><div style="left:4px;top:174px;width:80px;height:25px;background:#428c0e;"></div><div style="left:3px;top:147px;width:82px;height:27px;background:#a6d88c;"></div><div style="left:4px;top:148px;width:80px;height:25px;background:#428c0e;"></div><div style="left:3px;top:121px;width:82px;height:27px;background:#a6d88c;"></div><div style="left:4px;top:122px;width:80px;height:25px;background:#428c0e;"></div><div style="left:3px;top:95px;width:82px;height:27px;background:#a6d88c;"></div><div style="left:4px;top:96px;width:80px;height:25px;background:#428c0e;"></div><div class="c" style="left:4px;top:96px;width:80px;height:25px;"><span><span style="color:#fff">西乙</span></span></div><div class="c" style="left:4px;top:122px;width:80px;height:25px;"><span><span style="color:#fff">西乙</span></span></div><div class="c" style="left:4px;top:148px;width:80px;height:25px;"><span><span style="color:#fff">西乙</span></span></div><div class="c" style="left:4px;top:174px;width:80px;height:25px;"><span><span style="color:#fff">西乙</span></span></div><div class="c" style="left:4px;top:200px;width:80px;height:25px;"><span><span style="color:#fff">西乙</span></span></div><div class="c" style="left:4px;top:226px;width:80px;height:25px;"><span><span style="color:#fff">西乙</span></span></div><div class="c" style="left:4px;top:252px;width:80px;height:25px;"><span><span style="color:#fff">西乙</span></span></div><div class="c" style="left:4px;top:278px;width:80px;height:25px;"><span><span style="color:#fff">西乙</span></span></div><div class="c" style="left:4px;top:304px;width:80px;height:25px;"><span><span style="color:#fff">球会友谊</span></span></div><div class="c" style="left:4px;top:330px;width:80px;height:25px;"><span><span style="color:#fff">球会友谊</span></span></div><div style="left:3px;top:356px;width:1028px;height:26px;background:#ffffff;"></div><div style="left:3px;top:356px;width:1px;height:26px;background:#c2c2c2;"></div><div style="left:1030px;top:356px;width:1px;height:26px;background:#c2c2c2;"></div><div style="left:3px;top:381px;width:1028px;height:1px;background:#c2c2c2;"></div><div class="c" style="left:4px;top:356px;width:1026px;height:25px;"><span><span class="sm">近<span style="color:#d61a1a">10</span>场,胜4平3负3, 胜率:<span style="color:#d61a1a">40%</span> 让胜率:<span style="color:#d61a1a">50%</span> 大率:<span style="color:#d61a1a">60%</span> 单率:<span style="color:#d61a1a">60%</span></span></span></div><div style="left:3px;top:31px;width:1028px;height:1px;background:#e3e1f7;"></div><div style="left:3px;top:382px;width:1028px;height:25px;background:#dce3ed;"></div><div class="tn" style="left:23px;top:385px;height:25px;line-height:25px;">萨拉戈萨</div><div class="lt" style="left:442px;top:382px;">近</div><div class="sel" style="left:458px;top:388px;width:36px;height:15px;"><span class="st" style="font-size:13px;left:6px;font-family:"Liberation Mono",monospace;">10</span><span class="chev"><svg width="10" height="7" viewBox="0 0 10 7"><path d="M1 1.2 L5 5.2 L9 1.2" fill="none" stroke="#000" stroke-width="2.1"/></svg></span></div><div class="lt" style="left:500px;top:382px;">场</div><div class="cb" style="left:516px;top:388px;"></div><div class="lt" style="left:533px;top:382px;">同客</div><div class="cb on" style="left:561px;top:388px;"><svg width="13" height="13" viewBox="0 0 13 13"><path d="M2.6 6.7 L5.2 9.3 L10.7 3.3" fill="none" stroke="#fff" stroke-width="2.1"/></svg></div><div class="lt" style="left:574px;top:382px;">西乙</div><div class="cb on" style="left:598px;top:388px;"><svg width="13" height="13" viewBox="0 0 13 13"><path d="M2.6 6.7 L5.2 9.3 L10.7 3.3" fill="none" stroke="#fff" stroke-width="2.1"/></svg></div><div class="lt" style="left:611px;top:382px;">球会友谊</div><div style="left:3px;top:407px;width:1028px;height:40px;background:#dce3ed;"></div><div style="left:3px;top:407px;width:1028px;height:1px;background:#c2c2c2;"></div><div style="left:3px;top:446px;width:1028px;height:1px;background:#c2c2c2;"></div><div style="left:498px;top:427px;width:532px;height:1px;background:#c2c2c2;"></div><div class="c" style="left:4px;top:409px;width:80px;height:38px;color:#333;"><span>类型</span></div><div class="c" style="left:85px;top:409px;width:77px;height:38px;color:#333;"><span>日期</span></div><div class="c" style="left:163px;top:409px;width:107px;height:38px;color:#333;"><span>主场</span></div><div class="c" style="left:271px;top:409px;width:92px;height:38px;color:#333;"><span>比分(半场)</span></div><div class="c" style="left:364px;top:409px;width:38px;height:38px;color:#333;"><span>角球</span></div><div class="c" style="left:403px;top:409px;width:95px;height:38px;color:#333;"><span>客场</span></div><div class="c" style="left:499px;top:429px;width:49px;height:18px;color:#333;"><span>主</span></div><div class="c" style="left:549px;top:429px;width:85px;height:18px;color:#333;"><span>让球</span></div><div class="c" style="left:635px;top:429px;width:52px;height:18px;color:#333;"><span>客</span></div><div class="c" style="left:688px;top:429px;width:67px;height:18px;color:#333;"><span>主</span></div><div class="c" style="left:756px;top:429px;width:67px;height:18px;color:#333;"><span>和</span></div><div class="c" style="left:824px;top:429px;width:68px;height:18px;color:#333;"><span>客</span></div><div class="c" style="left:893px;top:429px;width:38px;height:18px;color:#333;"><span>胜负</span></div><div class="c" style="left:932px;top:429px;width:38px;height:18px;color:#333;"><span>让球</span></div><div class="c" style="left:971px;top:429px;width:59px;height:18px;color:#333;"><span>进球数</span></div><div class="sel" style="left:533px;top:408px;width:59px;height:17px;"><span class="st" style="font-size:13.33px;left:4px;">Crow*</span><span class="chev"><svg width="10" height="7" viewBox="0 0 10 7"><path d="M1 1.2 L5 5.2 L9 1.2" fill="none" stroke="#000" stroke-width="2.1"/></svg></span></div><div class="sel" style="left:601px;top:408px;width:49px;height:17px;"><span class="st" style="font-size:13.33px;left:4px;">终指</span><span class="chev"><svg width="10" height="7" viewBox="0 0 10 7"><path d="M1 1.2 L5 5.2 L9 1.2" fill="none" stroke="#000" stroke-width="2.1"/></svg></span></div><div class="sel" style="left:725px;top:408px;width:68px;height:17px;"><span class="st" style="font-size:13.33px;left:4px;">平均值</span><span class="chev"><svg width="10" height="7" viewBox="0 0 10 7"><path d="M1 1.2 L5 5.2 L9 1.2" fill="none" stroke="#000" stroke-width="2.1"/></svg></span></div><div class="sel" style="left:803px;top:408px;width:49px;height:17px;"><span class="st" style="font-size:13.33px;left:4px;">终指</span><span class="chev"><svg width="10" height="7" viewBox="0 0 10 7"><path d="M1 1.2 L5 5.2 L9 1.2" fill="none" stroke="#000" stroke-width="2.1"/></svg></span></div><div class="sel" style="left:936px;top:408px;width:49px;height:17px;"><span class="st" style="font-size:13.33px;left:4px;">全场</span><span class="chev"><svg width="10" height="7" viewBox="0 0 10 7"><path d="M1 1.2 L5 5.2 L9 1.2" fill="none" stroke="#000" stroke-width="2.1"/></svg></span></div><div style="left:4px;top:447px;width:80px;height:25px;background:#428c0e;"></div><div style="left:85px;top:447px;width:77px;height:25px;background:#ffffff;"></div><div style="left:163px;top:447px;width:107px;height:25px;background:#ffffff;"></div><div style="left:271px;top:447px;width:92px;height:25px;background:#ffffff;"></div><div style="left:364px;top:447px;width:38px;height:25px;background:#ffffff;"></div><div style="left:403px;top:447px;width:95px;height:25px;background:#ffffff;"></div><div style="left:499px;top:447px;width:49px;height:25px;background:#fdf9f5;"></div><div style="left:549px;top:447px;width:85px;height:25px;background:#fdf9f5;"></div><div style="left:635px;top:447px;width:52px;height:25px;background:#fdf9f5;"></div><div style="left:688px;top:447px;width:67px;height:25px;background:#f0f7fb;"></div><div style="left:756px;top:447px;width:67px;height:25px;background:#f0f7fb;"></div><div style="left:824px;top:447px;width:68px;height:25px;background:#f0f7fb;"></div><div style="left:893px;top:447px;width:38px;height:25px;background:#ffffff;"></div><div style="left:932px;top:447px;width:38px;height:25px;background:#ffffff;"></div><div style="left:971px;top:447px;width:59px;height:25px;background:#ffffff;"></div><div class="c" style="left:4px;top:447px;width:80px;height:25px;"><span></span></div><div class="c" style="left:85px;top:447px;width:77px;height:25px;color:#2e2e2e;-webkit-text-stroke-width:0;"><span>25-10-05</span></div><div class="c" style="left:163px;top:447px;width:107px;height:25px;"><span><span class="bd">1</span><span style="color:#067a06">萨拉戈萨</span></span></div><div class="c" style="left:271px;top:447px;width:92px;height:25px;color:#2e2e2e;-webkit-text-stroke-width:0;"><span><span style="color:#d61a1a">0-1</span>(0-0)</span></div><div class="c" style="left:364px;top:447px;width:38px;height:25px;color:#2e2e2e;-webkit-text-stroke-width:0;"><span>7-4</span></div><div class="c" style="left:403px;top:447px;width:95px;height:25px;"><span><span style="color:#111111">科尔多瓦</span></span></div><div class="c" style="left:499px;top:447px;width:49px;height:25px;color:#2e2e2e;-webkit-text-stroke-width:0;"><span>0.99</span></div><div class="c" style="left:549px;top:447px;width:85px;height:25px;"><span>平/半</span></div><div class="c" style="left:635px;top:447px;width:52px;height:25px;color:#2e2e2e;-webkit-text-stroke-width:0;"><span>0.89</span></div><div class="c" style="left:688px;top:447px;width:67px;height:25px;color:#2e2e2e;-webkit-text-stroke-width:0;"><span>2.25</span></div><div class="c" style="left:756px;top:447px;width:67px;height:25px;color:#2e2e2e;-webkit-text-stroke-width:0;"><span>3.18</span></div><div class="c" style="left:824px;top:447px;width:68px;height:25px;color:#2e2e2e;-webkit-text-stroke-width:0;"><span>3.15</span></div><div class="c" style="left:893px;top:447px;width:38px;height:25px;"><span><span style="color:#1414b0">负</span></span></div><div class="c" style="left:932px;top:447px;width:38px;height:25px;"><span><span style="color:#1414b0">输</span></span></div><div class="c" style="left:971px;top:447px;width:59px;height:25px;"><span><span style="color:#1414b0">小</span></span></div><div style="left:3px;top:472px;width:1028px;height:1px;background:#c2c2c2;"></div><div style="left:4px;top:473px;width:80px;height:25px;background:#428c0e;"></div><div style="left:85px;top:473px;width:77px;height:25px;background:#efefef;"></div><div style="left:163px;top:473px;width:107px;height:25px;background:#efefef;"></div><div style="left:271px;top:473px;width:92px;height:25px;background:#efefef;"></div><div style="left:364px;top:473px;width:38px;height:25px;background:#efefef;"></div><div style="left:403px;top:473px;width:95px;height:25px;background:#efefef;"></div><div style="left:499px;top:473px;width:49px;height:25px;background:#fdf9f5;"></div><div style="left:549px;top:473px;width:85px;height:25px;background:#fdf9f5;"></div><div style="left:635px;top:473px;width:52px;height:25px;background:#fdf9f5;"></div><div style="left:688px;top:473px;width:67px;height:25px;background:#f0f7fb;"></div><div style="left:756px;top:473px;width:67px;height:25px;background:#f0f7fb;"></div><div style="left:824px;top:473px;width:68px;height:25px;background:#f0f7fb;"></div><div style="left:893px;top:473px;width:38px;height:25px;background:#efefef;"></div><div style="left:932px;top:473px;width:38px;height:25px;background:#efefef;"></div><div style="left:971px;top:473px;width:59px;height:25px;background:#efefef;"></div><div class="c" style="left:4px;top:473px;width:80px;height:25px;"><span></span></div><div class="c" style="left:85px;top:473px;width:77px;height:25px;color:#2e2e2e;-webkit-text-stroke-width:0;"><span>25-09-27</span></div><div class="c" style="left:163px;top:473px;width:107px;height:25px;"><span><span style="color:#111111">米兰德斯</span></span></div><div class="c" style="left:271px;top:473px;width:92px;height:25px;color:#2e2e2e;-webkit-text-stroke-width:0;"><span><span style="color:#d61a1a">0-1</span>(0-1)</span></div><div class="c" style="left:364px;top:473px;width:38px;height:25px;color:#2e2e2e;-webkit-text-stroke-width:0;"><span>4-2</span></div><div class="c" style="left:403px;top:473px;width:95px;height:25px;"><span><span style="color:#067a06">萨拉戈萨</span></span></div><div class="c" style="left:499px;top:473px;width:49px;height:25px;color:#2e2e2e;-webkit-text-stroke-width:0;"><span>0.79</span></div><div class="c" style="left:549px;top:473px;width:85px;height:25px;"><span>平手</span></div><div class="c" style="left:635px;top:473px;width:52px;height:25px;color:#2e2e2e;-webkit-text-stroke-width:0;"><span>1.09</span></div><div class="c" style="left:688px;top:473px;width:67px;height:25px;color:#2e2e2e;-webkit-text-stroke-width:0;"><span>2.60</span></div><div class="c" style="left:756px;top:473px;width:67px;height:25px;color:#2e2e2e;-webkit-text-stroke-width:0;"><span>3.03</span></div><div class="c" style="left:824px;top:473px;width:68px;height:25px;color:#2e2e2e;-webkit-text-stroke-width:0;"><span>2.75</span></div><div class="c" style="left:893px;top:473px;width:38px;height:25px;"><span><span style="color:#d61a1a">胜</span></span></div><div class="c" style="left:932px;top:473px;width:38px;height:25px;"><span><span style="color:#d61a1a">赢</span></span></div><div class="c" style="left:971px;top:473px;width:59px;height:25px;"><span><span style="color:#1414b0">小</span></span></div><div style="left:3px;top:498px;width:1028px;height:1px;background:#c2c2c2;"></div><div style="left:4px;top:499px;width:80px;height:25px;background:#428c0e;"></div><div style="left:85px;top:499px;width:77px;height:25px;background:#ffffff;"></div><div style="left:163px;top:499px;width:107px;height:25px;background:#ffffff;"></div><div style="left:271px;top:499px;width:92px;height:25px;background:#ffffff;"></div><div style="left:364px;top:499px;width:38px;height:25px;background:#ffffff;"></div><div style="left:403px;top:499px;width:95px;height:25px;background:#ffffff;"></div><div style="left:499px;top:499px;width:49px;height:25px;background:#fdf9f5;"></div><div style="left:549px;top:499px;width:85px;height:25px;background:#fdf9f5;"></div><div style="left:635px;top:499px;width:52px;height:25px;background:#fdf9f5;"></div><div style="left:688px;top:499px;width:67px;height:25px;background:#f0f7fb;"></div><div style="left:756px;top:499px;width:67px;height:25px;background:#f0f7fb;"></div><div style="left:824px;top:499px;width:68px;height:25px;background:#f0f7fb;"></div><div style="left:893px;top:499px;width:38px;height:25px;background:#ffffff;"></div><div style="left:932px;top:499px;width:38px;height:25px;background:#ffffff;"></div><div style="left:971px;top:499px;width:59px;height:25px;background:#ffffff;"></div><div class="c" style="left:4px;top:499px;width:80px;height:25px;"><span></span></div><div class="c" style="left:85px;top:499px;width:77px;height:25px;color:#2e2e2e;-webkit-text-stroke-width:0;"><span>25-09-21</span></div><div class="c" style="left:163px;top:499px;width:107px;height:25px;"><span><span style="color:#111111">休达</span></span></div><div class="c" style="left:271px;top:499px;width:92px;height:25px;color:#2e2e2e;-webkit-text-stroke-width:0;"><span><span style="color:#d61a1a">1-0</span>(0-0)</span></div><div class="c" style="left:364px;top:499px;width:38px;height:25px;color:#2e2e2e;-webkit-text-stroke-width:0;"><span>6-5</span></div><div class="c" style="left:403px;top:499px;width:95px;height:25px;"><span><span style="color:#067a06">萨拉戈萨</span></span></div><div class="c" style="left:499px;top:499px;width:49px;height:25px;color:#2e2e2e;-webkit-text-stroke-width:0;"><span>1.02</span></div><div class="c" style="left:549px;top:499px;width:85px;height:25px;"><span>半球</span></div><div class="c" style="left:635px;top:499px;width:52px;height:25px;color:#2e2e2e;-webkit-text-stroke-width:0;"><span>0.86</span></div><div class="c" style="left:688px;top:499px;width:67px;height:25px;color:#2e2e2e;-webkit-text-stroke-width:0;"><span>2.10</span></div><div class="c" style="left:756px;top:499px;width:67px;height:25px;color:#2e2e2e;-webkit-text-stroke-width:0;"><span>3.27</span></div><div class="c" style="left:824px;top:499px;width:68px;height:25px;color:#2e2e2e;-webkit-text-stroke-width:0;"><span>3.43</span></div><div class="c" style="left:893px;top:499px;width:38px;height:25px;"><span><span style="color:#1414b0">负</span></span></div><div class="c" style="left:932px;top:499px;width:38px;height:25px;"><span><span style="color:#1414b0">输</span></span></div><div class="c" style="left:971px;top:499px;width:59px;height:25px;"><span><span style="color:#1414b0">小</span></span></div><div style="left:3px;top:524px;width:1028px;height:1px;background:#c2c2c2;"></div><div style="left:4px;top:525px;width:80px;height:25px;background:#428c0e;"></div><div style="left:85px;top:525px;width:77px;height:25px;background:#efefef;"></div><div style="left:163px;top:525px;width:107px;height:25px;background:#efefef;"></div><div style="left:271px;top:525px;width:92px;height:25px;background:#efefef;"></div><div style="left:364px;top:525px;width:38px;height:25px;background:#efefef;"></div><div style="left:403px;top:525px;width:95px;height:25px;background:#efefef;"></div><div style="left:499px;top:525px;width:49px;height:25px;background:#fdf9f5;"></div><div style="left:549px;top:525px;width:85px;height:25px;background:#fdf9f5;"></div><div style="left:635px;top:525px;width:52px;height:25px;background:#fdf9f5;"></div><div style="left:688px;top:525px;width:67px;height:25px;background:#f0f7fb;"></div><div style="left:756px;top:525px;width:67px;height:25px;background:#f0f7fb;"></div><div style="left:824px;top:525px;width:68px;height:25px;background:#f0f7fb;"></div><div style="left:893px;top:525px;width:38px;height:25px;background:#efefef;"></div><div style="left:932px;top:525px;width:38px;height:25px;background:#efefef;"></div><div style="left:971px;top:525px;width:59px;height:25px;background:#efefef;"></div><div class="c" style="left:4px;top:525px;width:80px;height:25px;"><span></span></div><div class="c" style="left:85px;top:525px;width:77px;height:25px;color:#2e2e2e;-webkit-text-stroke-width:0;"><span>25-09-16</span></div><div class="c" style="left:163px;top:525px;width:107px;height:25px;"><span><span style="color:#067a06">萨拉戈萨</span></span></div><div class="c" style="left:271px;top:525px;width:92px;height:25px;color:#2e2e2e;-webkit-text-stroke-width:0;"><span><span style="color:#d61a1a">0-0</span>(0-0)</span></div><div class="c" style="left:364px;top:525px;width:38px;height:25px;color:#2e2e2e;-webkit-text-stroke-width:0;"><span>3-6</span></div><div class="c" style="left:403px;top:525px;width:95px;height:25px;"><span><span style="color:#111111">阿尔巴塞特</span></span></div><div class="c" style="left:499px;top:525px;width:49px;height:25px;color:#2e2e2e;-webkit-text-stroke-width:0;"><span>1.07</span></div><div class="c" style="left:549px;top:525px;width:85px;height:25px;"><span>平/半</span></div><div class="c" style="left:635px;top:525px;width:52px;height:25px;color:#2e2e2e;-webkit-text-stroke-width:0;"><span>0.82</span></div><div class="c" style="left:688px;top:525px;width:67px;height:25px;color:#2e2e2e;-webkit-text-stroke-width:0;"><span>2.28</span></div><div class="c" style="left:756px;top:525px;width:67px;height:25px;color:#2e2e2e;-webkit-text-stroke-width:0;"><span>3.18</span></div><div class="c" style="left:824px;top:525px;width:68px;height:25px;color:#2e2e2e;-webkit-text-stroke-width:0;"><span>3.10</span></div><div class="c" style="left:893px;top:525px;width:38px;height:25px;"><span><span style="color:#067a06">平</span></span></div><div class="c" style="left:932px;top:525px;width:38px;height:25px;"><span><span style="color:#1414b0">输</span></span></div><div class="c" style="left:971px;top:525px;width:59px;height:25px;"><span><span style="color:#1414b0">小</span></span></div><div style="left:3px;top:550px;width:1028px;height:1px;background:#c2c2c2;"></div><div style="left:4px;top:551px;width:80px;height:25px;background:#428c0e;"></div><div style="left:85px;top:551px;width:77px;height:25px;background:#ffffff;"></div><div style="left:163px;top:551px;width:107px;height:25px;background:#ffffff;"></div><div style="left:271px;top:551px;width:92px;height:25px;background:#ffffff;"></div><div style="left:364px;top:551px;width:38px;height:25px;background:#ffffff;"></div><div style="left:403px;top:551px;width:95px;height:25px;background:#ffffff;"></div><div style="left:499px;top:551px;width:49px;height:25px;background:#fdf9f5;"></div><div style="left:549px;top:551px;width:85px;height:25px;background:#fdf9f5;"></div><div style="left:635px;top:551px;width:52px;height:25px;background:#fdf9f5;"></div><div style="left:688px;top:551px;width:67px;height:25px;background:#f0f7fb;"></div><div style="left:756px;top:551px;width:67px;height:25px;background:#f0f7fb;"></div><div style="left:824px;top:551px;width:68px;height:25px;background:#f0f7fb;"></div><div style="left:893px;top:551px;width:38px;height:25px;background:#ffffff;"></div><div style="left:932px;top:551px;width:38px;height:25px;background:#ffffff;"></div><div style="left:971px;top:551px;width:59px;height:25px;background:#ffffff;"></div><div class="c" style="left:4px;top:551px;width:80px;height:25px;"><span></span></div><div class="c" style="left:85px;top:551px;width:77px;height:25px;color:#2e2e2e;-webkit-text-stroke-width:0;"><span>25-09-07</span></div><div class="c" style="left:163px;top:551px;width:107px;height:25px;"><span><span style="color:#067a06">萨拉戈萨</span></span></div><div class="c" style="left:271px;top:551px;width:92px;height:25px;color:#2e2e2e;-webkit-text-stroke-width:0;"><span><span style="color:#d61a1a">1-1</span>(0-0)</span></div><div class="c" style="left:364px;top:551px;width:38px;height:25px;color:#2e2e2e;-webkit-text-stroke-width:0;"><span>1-7</span></div><div class="c" style="left:403px;top:551px;width:95px;height:25px;"><span><span style="color:#111111">巴拉多利德</span></span></div><div class="c" style="left:499px;top:551px;width:49px;height:25px;color:#2e2e2e;-webkit-text-stroke-width:0;"><span>0.89</span></div><div class="c" style="left:549px;top:551px;width:85px;height:25px;"><span>平手</span></div><div class="c" style="left:635px;top:551px;width:52px;height:25px;color:#2e2e2e;-webkit-text-stroke-width:0;"><span>1.00</span></div><div class="c" style="left:688px;top:551px;width:67px;height:25px;color:#2e2e2e;-webkit-text-stroke-width:0;"><span>2.59</span></div><div class="c" style="left:756px;top:551px;width:67px;height:25px;color:#2e2e2e;-webkit-text-stroke-width:0;"><span>3.07</span></div><div class="c" style="left:824px;top:551px;width:68px;height:25px;color:#2e2e2e;-webkit-text-stroke-width:0;"><span>2.75</span></div><div class="c" style="left:893px;top:551px;width:38px;height:25px;"><span><span style="color:#067a06">平</span></span></div><div class="c" style="left:932px;top:551px;width:38px;height:25px;"><span><span style="color:#067a06">走</span></span></div><div class="c" style="left:971px;top:551px;width:59px;height:25px;"><span><span style="color:#1414b0">小</span></span></div><div style="left:3px;top:576px;width:1028px;height:1px;background:#c2c2c2;"></div><div style="left:4px;top:577px;width:80px;height:25px;background:#428c0e;"></div><div style="left:85px;top:577px;width:77px;height:25px;background:#efefef;"></div><div style="left:163px;top:577px;width:107px;height:25px;background:#efefef;"></div><div style="left:271px;top:577px;width:92px;height:25px;background:#efefef;"></div><div style="left:364px;top:577px;width:38px;height:25px;background:#efefef;"></div><div style="left:403px;top:577px;width:95px;height:25px;background:#efefef;"></div><div style="left:499px;top:577px;width:49px;height:25px;background:#fdf9f5;"></div><div style="left:549px;top:577px;width:85px;height:25px;background:#fdf9f5;"></div><div style="left:635px;top:577px;width:52px;height:25px;background:#fdf9f5;"></div><div style="left:688px;top:577px;width:67px;height:25px;background:#f0f7fb;"></div><div style="left:756px;top:577px;width:67px;height:25px;background:#f0f7fb;"></div><div style="left:824px;top:577px;width:68px;height:25px;background:#f0f7fb;"></div><div style="left:893px;top:577px;width:38px;height:25px;background:#efefef;"></div><div style="left:932px;top:577px;width:38px;height:25px;background:#efefef;"></div><div style="left:971px;top:577px;width:59px;height:25px;background:#efefef;"></div><div class="c" style="left:4px;top:577px;width:80px;height:25px;"><span></span></div><div class="c" style="left:85px;top:577px;width:77px;height:25px;color:#2e2e2e;-webkit-text-stroke-width:0;"><span>25-08-31</span></div><div class="c" style="left:163px;top:577px;width:107px;height:25px;"><span><span style="color:#111111">卡斯迪隆</span></span></div><div class="c" style="left:271px;top:577px;width:92px;height:25px;color:#2e2e2e;-webkit-text-stroke-width:0;"><span><span style="color:#d61a1a">1-1</span>(0-0)</span></div><div class="c" style="left:364px;top:577px;width:38px;height:25px;color:#2e2e2e;-webkit-text-stroke-width:0;"><span>7-3</span></div><div class="c" style="left:403px;top:577px;width:95px;height:25px;"><span><span style="color:#067a06">萨拉戈萨</span></span></div><div class="c" style="left:499px;top:577px;width:49px;height:25px;color:#2e2e2e;-webkit-text-stroke-width:0;"><span>0.93</span></div><div class="c" style="left:549px;top:577px;width:85px;height:25px;"><span>半/一</span></div><div class="c" style="left:635px;top:577px;width:52px;height:25px;color:#2e2e2e;-webkit-text-stroke-width:0;"><span>0.96</span></div><div class="c" style="left:688px;top:577px;width:67px;height:25px;color:#2e2e2e;-webkit-text-stroke-width:0;"><span>1.71</span></div><div class="c" style="left:756px;top:577px;width:67px;height:25px;color:#2e2e2e;-webkit-text-stroke-width:0;"><span>3.80</span></div><div class="c" style="left:824px;top:577px;width:68px;height:25px;color:#2e2e2e;-webkit-text-stroke-width:0;"><span>4.39</span></div><div class="c" style="left:893px;top:577px;width:38px;height:25px;"><span><span style="color:#067a06">平</span></span></div><div class="c" style="left:932px;top:577px;width:38px;height:25px;"><span><span style="color:#d61a1a">赢</span></span></div><div class="c" style="left:971px;top:577px;width:59px;height:25px;"><span><span style="color:#1414b0">小</span></span></div><div style="left:3px;top:602px;width:1028px;height:1px;background:#c2c2c2;"></div><div style="left:4px;top:603px;width:80px;height:25px;background:#428c0e;"></div><div style="left:85px;top:603px;width:77px;height:25px;background:#ffffff;"></div><div style="left:163px;top:603px;width:107px;height:25px;background:#ffffff;"></div><div style="left:271px;top:603px;width:92px;height:25px;background:#ffffff;"></div><div style="left:364px;top:603px;width:38px;height:25px;background:#ffffff;"></div><div style="left:403px;top:603px;width:95px;height:25px;background:#ffffff;"></div><div style="left:499px;top:603px;width:49px;height:25px;background:#fdf9f5;"></div><div style="left:549px;top:603px;width:85px;height:25px;background:#fdf9f5;"></div><div style="left:635px;top:603px;width:52px;height:25px;background:#fdf9f5;"></div><div style="left:688px;top:603px;width:67px;height:25px;background:#f0f7fb;"></div><div style="left:756px;top:603px;width:67px;height:25px;background:#f0f7fb;"></div><div style="left:824px;top:603px;width:68px;height:25px;background:#f0f7fb;"></div><div style="left:893px;top:603px;width:38px;height:25px;background:#ffffff;"></div><div style="left:932px;top:603px;width:38px;height:25px;background:#ffffff;"></div><div style="left:971px;top:603px;width:59px;height:25px;background:#ffffff;"></div><div class="c" style="left:4px;top:603px;width:80px;height:25px;"><span></span></div><div class="c" style="left:85px;top:603px;width:77px;height:25px;color:#2e2e2e;-webkit-text-stroke-width:0;"><span>25-08-24</span></div><div class="c" style="left:163px;top:603px;width:107px;height:25px;"><span><span class="bd">1</span><span style="color:#067a06">萨拉戈萨</span></span></div><div class="c" style="left:271px;top:603px;width:92px;height:25px;color:#2e2e2e;-webkit-text-stroke-width:0;"><span><span style="color:#d61a1a">1-3</span>(0-1)</span></div><div class="c" style="left:364px;top:603px;width:38px;height:25px;color:#2e2e2e;-webkit-text-stroke-width:0;"><span>6-5</span></div><div class="c" style="left:403px;top:603px;width:95px;height:25px;"><span><span style="color:#111111">安道尔FC</span></span></div><div class="c" style="left:499px;top:603px;width:49px;height:25px;color:#2e2e2e;-webkit-text-stroke-width:0;"><span>1.05</span></div><div class="c" style="left:549px;top:603px;width:85px;height:25px;"><span>半/一</span></div><div class="c" style="left:635px;top:603px;width:52px;height:25px;color:#2e2e2e;-webkit-text-stroke-width:0;"><span>0.84</span></div><div class="c" style="left:688px;top:603px;width:67px;height:25px;color:#2e2e2e;-webkit-text-stroke-width:0;"><span>1.82</span></div><div class="c" style="left:756px;top:603px;width:67px;height:25px;color:#2e2e2e;-webkit-text-stroke-width:0;"><span>3.40</span></div><div class="c" style="left:824px;top:603px;width:68px;height:25px;color:#2e2e2e;-webkit-text-stroke-width:0;"><span>4.30</span></div><div class="c" style="left:893px;top:603px;width:38px;height:25px;"><span><span style="color:#1414b0">负</span></span></div><div class="c" style="left:932px;top:603px;width:38px;height:25px;"><span><span style="color:#1414b0">输</span></span></div><div class="c" style="left:971px;top:603px;width:59px;height:25px;"><span><span style="color:#d61a1a">大</span></span></div><div style="left:3px;top:628px;width:1028px;height:1px;background:#c2c2c2;"></div><div style="left:4px;top:629px;width:80px;height:25px;background:#428c0e;"></div><div style="left:85px;top:629px;width:77px;height:25px;background:#efefef;"></div><div style="left:163px;top:629px;width:107px;height:25px;background:#efefef;"></div><div style="left:271px;top:629px;width:92px;height:25px;background:#efefef;"></div><div style="left:364px;top:629px;width:38px;height:25px;background:#efefef;"></div><div style="left:403px;top:629px;width:95px;height:25px;background:#efefef;"></div><div style="left:499px;top:629px;width:49px;height:25px;background:#fdf9f5;"></div><div style="left:549px;top:629px;width:85px;height:25px;background:#fdf9f5;"></div><div style="left:635px;top:629px;width:52px;height:25px;background:#fdf9f5;"></div><div style="left:688px;top:629px;width:67px;height:25px;background:#f0f7fb;"></div><div style="left:756px;top:629px;width:67px;height:25px;background:#f0f7fb;"></div><div style="left:824px;top:629px;width:68px;height:25px;background:#f0f7fb;"></div><div style="left:893px;top:629px;width:38px;height:25px;background:#efefef;"></div><div style="left:932px;top:629px;width:38px;height:25px;background:#efefef;"></div><div style="left:971px;top:629px;width:59px;height:25px;background:#efefef;"></div><div class="c" style="left:4px;top:629px;width:80px;height:25px;"><span></span></div><div class="c" style="left:85px;top:629px;width:77px;height:25px;color:#2e2e2e;-webkit-text-stroke-width:0;"><span>25-08-17</span></div><div class="c" style="left:163px;top:629px;width:107px;height:25px;"><span><span style="color:#111111">皇家社会B队</span></span></div><div class="c" style="left:271px;top:629px;width:92px;height:25px;color:#2e2e2e;-webkit-text-stroke-width:0;"><span><span style="color:#d61a1a">1-0</span>(1-0)</span></div><div class="c" style="left:364px;top:629px;width:38px;height:25px;color:#2e2e2e;-webkit-text-stroke-width:0;"><span>2-9</span></div><div class="c" style="left:403px;top:629px;width:95px;height:25px;"><span><span style="color:#067a06">萨拉戈萨</span></span></div><div class="c" style="left:499px;top:629px;width:49px;height:25px;color:#2e2e2e;-webkit-text-stroke-width:0;"><span>0.84</span></div><div class="c" style="left:549px;top:629px;width:85px;height:25px;"><span>受平/半</span></div><div class="c" style="left:635px;top:629px;width:52px;height:25px;color:#2e2e2e;-webkit-text-stroke-width:0;"><span>1.05</span></div><div class="c" style="left:688px;top:629px;width:67px;height:25px;color:#2e2e2e;-webkit-text-stroke-width:0;"><span>2.73</span></div><div class="c" style="left:756px;top:629px;width:67px;height:25px;color:#2e2e2e;-webkit-text-stroke-width:0;"><span>2.96</span></div><div class="c" style="left:824px;top:629px;width:68px;height:25px;color:#2e2e2e;-webkit-text-stroke-width:0;"><span>2.68</span></div><div class="c" style="left:893px;top:629px;width:38px;height:25px;"><span><span style="color:#1414b0">负</span></span></div><div class="c" style="left:932px;top:629px;width:38px;height:25px;"><span><span style="color:#1414b0">输</span></span></div><div class="c" style="left:971px;top:629px;width:59px;height:25px;"><span><span style="color:#1414b0">小</span></span></div><div style="left:3px;top:654px;width:1028px;height:1px;background:#c2c2c2;"></div><div style="left:4px;top:655px;width:80px;height:25px;background:#08a5a5;"></div><div style="left:85px;top:655px;width:77px;height:25px;background:#ffffff;"></div><div style="left:163px;top:655px;width:107px;height:25px;background:#ffffff;"></div><div style="left:271px;top:655px;width:92px;height:25px;background:#ffffff;"></div><div style="left:364px;top:655px;width:38px;height:25px;background:#ffffff;"></div><div style="left:403px;top:655px;width:95px;height:25px;background:#ffffff;"></div><div style="left:499px;top:655px;width:49px;height:25px;background:#fdf9f5;"></div><div style="left:549px;top:655px;width:85px;height:25px;background:#fdf9f5;"></div><div style="left:635px;top:655px;width:52px;height:25px;background:#fdf9f5;"></div><div style="left:688px;top:655px;width:67px;height:25px;background:#f0f7fb;"></div><div style="left:756px;top:655px;width:67px;height:25px;background:#f0f7fb;"></div><div style="left:824px;top:655px;width:68px;height:25px;background:#f0f7fb;"></div><div style="left:893px;top:655px;width:38px;height:25px;background:#ffffff;"></div><div style="left:932px;top:655px;width:38px;height:25px;background:#ffffff;"></div><div style="left:971px;top:655px;width:59px;height:25px;background:#ffffff;"></div><div class="c" style="left:4px;top:655px;width:80px;height:25px;"><span></span></div><div class="c" style="left:85px;top:655px;width:77px;height:25px;color:#2e2e2e;-webkit-text-stroke-width:0;"><span>25-08-10</span></div><div class="c" style="left:163px;top:655px;width:107px;height:25px;"><span><span style="color:#067a06">萨拉戈萨</span></span></div><div class="c" style="left:271px;top:655px;width:92px;height:25px;color:#2e2e2e;-webkit-text-stroke-width:0;"><span><span style="color:#d61a1a">1-1</span>(1-1)</span></div><div class="c" style="left:364px;top:655px;width:38px;height:25px;color:#2e2e2e;-webkit-text-stroke-width:0;"><span>2-6</span></div><div class="c" style="left:403px;top:655px;width:95px;height:25px;"><span><span style="color:#111111">韦斯卡</span><span class="bd">1</span></span></div><div class="c" style="left:499px;top:655px;width:49px;height:25px;color:#2e2e2e;-webkit-text-stroke-width:0;"><span>0.91</span></div><div class="c" style="left:549px;top:655px;width:85px;height:25px;"><span>平/半</span></div><div class="c" style="left:635px;top:655px;width:52px;height:25px;color:#2e2e2e;-webkit-text-stroke-width:0;"><span>0.91</span></div><div class="c" style="left:688px;top:655px;width:67px;height:25px;color:#2e2e2e;-webkit-text-stroke-width:0;"><span>2.17</span></div><div class="c" style="left:756px;top:655px;width:67px;height:25px;color:#2e2e2e;-webkit-text-stroke-width:0;"><span>3.10</span></div><div class="c" style="left:824px;top:655px;width:68px;height:25px;color:#2e2e2e;-webkit-text-stroke-width:0;"><span>3.16</span></div><div class="c" style="left:893px;top:655px;width:38px;height:25px;"><span><span style="color:#067a06">平</span></span></div><div class="c" style="left:932px;top:655px;width:38px;height:25px;"><span><span style="color:#1414b0">输</span></span></div><div class="c" style="left:971px;top:655px;width:59px;height:25px;"><span><span style="color:#1414b0">小</span></span></div><div style="left:3px;top:680px;width:1028px;height:1px;background:#c2c2c2;"></div><div style="left:4px;top:681px;width:80px;height:25px;background:#08a5a5;"></div><div style="left:85px;top:681px;width:77px;height:25px;background:#efefef;"></div><div style="left:163px;top:681px;width:107px;height:25px;background:#efefef;"></div><div style="left:271px;top:681px;width:92px;height:25px;background:#efefef;"></div><div style="left:364px;top:681px;width:38px;height:25px;background:#efefef;"></div><div style="left:403px;top:681px;width:95px;height:25px;background:#efefef;"></div><div style="left:499px;top:681px;width:49px;height:25px;background:#fdf9f5;"></div><div style="left:549px;top:681px;width:85px;height:25px;background:#fdf9f5;"></div><div style="left:635px;top:681px;width:52px;height:25px;background:#fdf9f5;"></div><div style="left:688px;top:681px;width:67px;height:25px;background:#f0f7fb;"></div><div style="left:756px;top:681px;width:67px;height:25px;background:#f0f7fb;"></div><div style="left:824px;top:681px;width:68px;height:25px;background:#f0f7fb;"></div><div style="left:893px;top:681px;width:38px;height:25px;background:#efefef;"></div><div style="left:932px;top:681px;width:38px;height:25px;background:#efefef;"></div><div style="left:971px;top:681px;width:59px;height:25px;background:#efefef;"></div><div class="c" style="left:4px;top:681px;width:80px;height:25px;"><span></span></div><div class="c" style="left:85px;top:681px;width:77px;height:25px;color:#2e2e2e;-webkit-text-stroke-width:0;"><span>25-08-07</span></div><div class="c" style="left:163px;top:681px;width:107px;height:25px;"><span><span style="color:#111111">塔拉戈纳</span></span></div><div class="c" style="left:271px;top:681px;width:92px;height:25px;color:#2e2e2e;-webkit-text-stroke-width:0;"><span><span style="color:#d61a1a">1-2</span>(1-1)</span></div><div class="c" style="left:364px;top:681px;width:38px;height:25px;color:#2e2e2e;-webkit-text-stroke-width:0;"><span>3-5</span></div><div class="c" style="left:403px;top:681px;width:95px;height:25px;"><span><span style="color:#067a06">萨拉戈萨</span></span></div><div class="c" style="left:499px;top:681px;width:49px;height:25px;color:#2e2e2e;-webkit-text-stroke-width:0;"><span>0.80</span></div><div class="c" style="left:549px;top:681px;width:85px;height:25px;"><span>受半球</span></div><div class="c" style="left:635px;top:681px;width:52px;height:25px;color:#2e2e2e;-webkit-text-stroke-width:0;"><span>1.02</span></div><div class="c" style="left:688px;top:681px;width:67px;height:25px;color:#2e2e2e;-webkit-text-stroke-width:0;"><span>3.19</span></div><div class="c" style="left:756px;top:681px;width:67px;height:25px;color:#2e2e2e;-webkit-text-stroke-width:0;"><span>3.27</span></div><div class="c" style="left:824px;top:681px;width:68px;height:25px;color:#2e2e2e;-webkit-text-stroke-width:0;"><span>2.06</span></div><div class="c" style="left:893px;top:681px;width:38px;height:25px;"><span><span style="color:#d61a1a">胜</span></span></div><div class="c" style="left:932px;top:681px;width:38px;height:25px;"><span><span style="color:#d61a1a">赢</span></span></div><div class="c" style="left:971px;top:681px;width:59px;height:25px;"><span><span style="color:#d61a1a">大</span></span></div><div style="left:3px;top:706px;width:1028px;height:1px;background:#c2c2c2;"></div><div style="left:3px;top:407px;width:1px;height:300px;background:#c2c2c2;"></div><div style="left:84px;top:407px;width:1px;height:300px;background:#c2c2c2;"></div><div style="left:162px;top:407px;width:1px;height:300px;background:#c2c2c2;"></div><div style="left:270px;top:407px;width:1px;height:300px;background:#c2c2c2;"></div><div style="left:363px;top:407px;width:1px;height:300px;background:#c2c2c2;"></div><div style="left:402px;top:407px;width:1px;height:300px;background:#c2c2c2;"></div><div style="left:498px;top:407px;width:1px;height:300px;background:#c2c2c2;"></div><div style="left:548px;top:427px;width:1px;height:280px;background:#c2c2c2;"></div><div style="left:634px;top:427px;width:1px;height:280px;background:#c2c2c2;"></div><div style="left:687px;top:407px;width:1px;height:300px;background:#c2c2c2;"></div><div style="left:755px;top:427px;width:1px;height:280px;background:#c2c2c2;"></div><div style="left:823px;top:427px;width:1px;height:280px;background:#c2c2c2;"></div><div style="left:892px;top:407px;width:1px;height:300px;background:#c2c2c2;"></div><div style="left:931px;top:427px;width:1px;height:280px;background:#c2c2c2;"></div><div style="left:970px;top:427px;width:1px;height:280px;background:#c2c2c2;"></div><div style="left:1030px;top:407px;width:1px;height:300px;background:#c2c2c2;"></div><div style="left:3px;top:680px;width:82px;height:27px;background:#a0e4e4;"></div><div style="left:4px;top:681px;width:80px;height:25px;background:#08a5a5;"></div><div style="left:3px;top:654px;width:82px;height:27px;background:#a0e4e4;"></div><div style="left:4px;top:655px;width:80px;height:25px;background:#08a5a5;"></div><div style="left:3px;top:628px;width:82px;height:27px;background:#a6d88c;"></div><div style="left:4px;top:629px;width:80px;height:25px;background:#428c0e;"></div><div style="left:3px;top:602px;width:82px;height:27px;background:#a6d88c;"></div><div style="left:4px;top:603px;width:80px;height:25px;background:#428c0e;"></div><div style="left:3px;top:576px;width:82px;height:27px;background:#a6d88c;"></div><div style="left:4px;top:577px;width:80px;height:25px;background:#428c0e;"></div><div style="left:3px;top:550px;width:82px;height:27px;background:#a6d88c;"></div><div style="left:4px;top:551px;width:80px;height:25px;background:#428c0e;"></div><div style="left:3px;top:524px;width:82px;height:27px;background:#a6d88c;"></div><div style="left:4px;top:525px;width:80px;height:25px;background:#428c0e;"></div><div style="left:3px;top:498px;width:82px;height:27px;background:#a6d88c;"></div><div style="left:4px;top:499px;width:80px;height:25px;background:#428c0e;"></div><div style="left:3px;top:472px;width:82px;height:27px;background:#a6d88c;"></div><div style="left:4px;top:473px;width:80px;height:25px;background:#428c0e;"></div><div style="left:3px;top:446px;width:82px;height:27px;background:#a6d88c;"></div><div style="left:4px;top:447px;width:80px;height:25px;background:#428c0e;"></div><div class="c" style="left:4px;top:447px;width:80px;height:25px;"><span><span style="color:#fff">西乙</span></span></div><div class="c" style="left:4px;top:473px;width:80px;height:25px;"><span><span style="color:#fff">西乙</span></span></div><div class="c" style="left:4px;top:499px;width:80px;height:25px;"><span><span style="color:#fff">西乙</span></span></div><div class="c" style="left:4px;top:525px;width:80px;height:25px;"><span><span style="color:#fff">西乙</span></span></div><div class="c" style="left:4px;top:551px;width:80px;height:25px;"><span><span style="color:#fff">西乙</span></span></div><div class="c" style="left:4px;top:577px;width:80px;height:25px;"><span><span style="color:#fff">西乙</span></span></div><div class="c" style="left:4px;top:603px;width:80px;height:25px;"><span><span style="color:#fff">西乙</span></span></div><div class="c" style="left:4px;top:629px;width:80px;height:25px;"><span><span style="color:#fff">西乙</span></span></div><div class="c" style="left:4px;top:655px;width:80px;height:25px;"><span><span style="color:#fff">球会友谊</span></span></div><div class="c" style="left:4px;top:681px;width:80px;height:25px;"><span><span style="color:#fff">球会友谊</span></span></div><div style="left:3px;top:707px;width:1028px;height:26px;background:#ffffff;"></div><div style="left:3px;top:707px;width:1px;height:26px;background:#c2c2c2;"></div><div style="left:1030px;top:707px;width:1px;height:26px;background:#c2c2c2;"></div><div style="left:3px;top:732px;width:1028px;height:1px;background:#c2c2c2;"></div><div class="c" style="left:4px;top:707px;width:1026px;height:25px;"><span><span class="sm">近<span style="color:#d61a1a">10</span>场,胜2平4负4, 胜率:<span style="color:#d61a1a">20%</span> 让胜率:<span style="color:#d61a1a">30%</span> 大率:<span style="color:#d61a1a">20%</span> 单率:<span style="color:#d61a1a">50%</span></span></span></div>
</body></html>
